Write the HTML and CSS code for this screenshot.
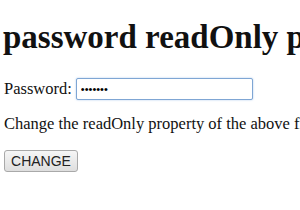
FILE: index.html
```html
<!DOCTYPE html>
<html lang="en">
  <head>
    <meta charset="UTF-8" />
    <title>password readOnly property</title>
    <link rel="stylesheet" href="styles.css">
  </head>
  <body>
    <h1>password readOnly property</h1>

    <!-- Password field -->
    <div class="field">
      Password: <input type="password" id="pwd" class="pwd-input" value="1234567">
    </div>

    <p>Change the readOnly property of the above field:</p>

    <button class="change-btn" onclick="document.getElementById('pwd').readOnly = !document.getElementById('pwd').readOnly">CHANGE</button>
  </body>
</html>
```

FILE: styles.css
```css
* {
  margin: 0;
  padding: 0;
  box-sizing: border-box;
}

body {
  font-family: "Liberation Serif", "Times New Roman", serif;
  font-size: 16.5px;
  color: #111;
  background: #fff;
  padding: 0 4px;
  white-space: nowrap;
  overflow: hidden;
}

h1 {
  font-size: 33px;
  font-weight: bold;
  margin-top: 18px;
  margin-bottom: 22px;
  line-height: 38px;
  margin-left: -1px;
}

.field {
  display: flex;
  align-items: center;
  gap: 4px;
  height: 22px;
}

.pwd-input {
  width: 177px;
  height: 22px;
  border: 1px solid #7fa6d4;
  border-radius: 2px;
  box-shadow: 0 0 2px rgba(110, 160, 220, 0.6);
  padding: 0 4px;
  font-size: 11px;
  outline: none;
}

p {
  margin-top: 14px;
  margin-bottom: 16px;
  line-height: 20px;
}

.change-btn {
  font-family: "Liberation Sans", Arial, sans-serif;
  font-size: 14px;
  color: #222;
  width: 74px;
  height: 22px;
  border: 1px solid #a9a9a9;
  border-radius: 3px;
  background: linear-gradient(#f6f6f6, #dedede);
}
```
